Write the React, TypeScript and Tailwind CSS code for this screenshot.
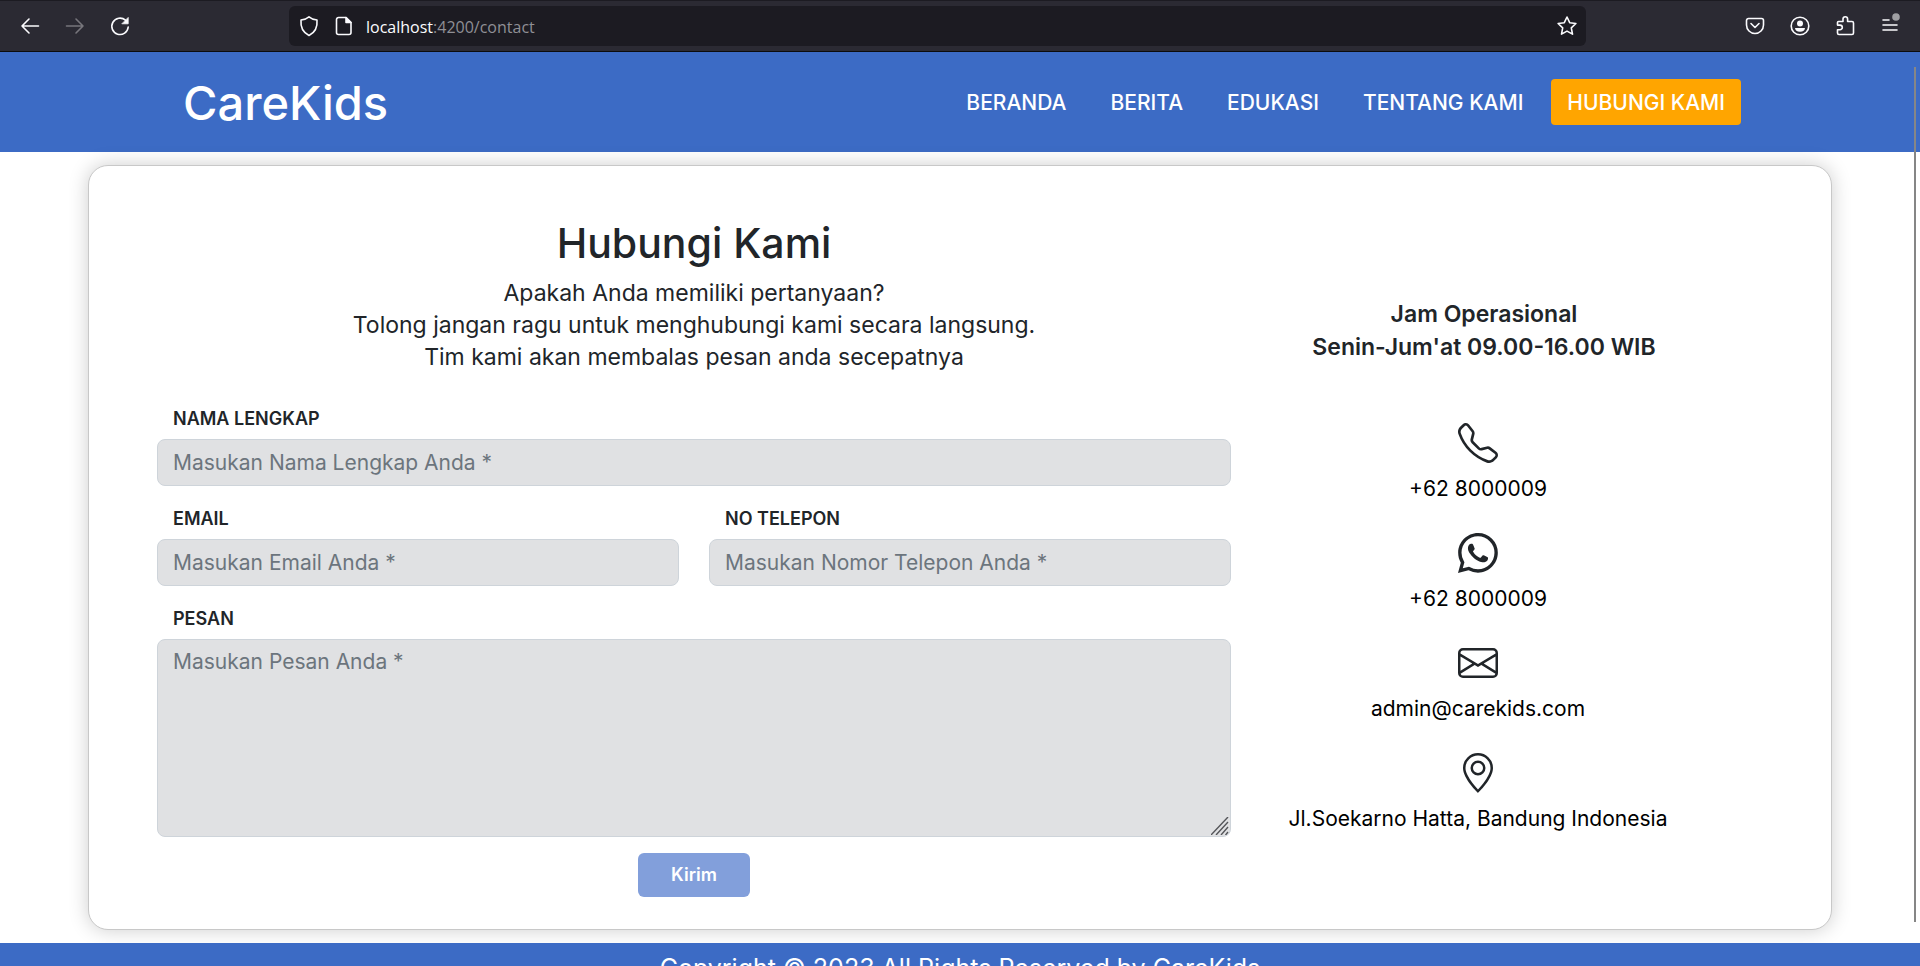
import type { ReactNode } from "react";
import { BsEnvelope, BsGeoAlt, BsTelephone, BsWhatsapp } from "react-icons/bs";

function ChromeIcon({ label, children, dim = false }: { label: string; children: ReactNode; dim?: boolean }) {
  return (
    <button type="button" aria-label={label} className={dim ? "text-[#77767c]" : "text-[#fbfbfe]"}>
      <svg width="20" height="20" viewBox="0 0 20 20" fill="none" stroke="currentColor" strokeWidth="1.6" strokeLinecap="round" strokeLinejoin="round" className="block overflow-visible">
        {children}
      </svg>
    </button>
  );
}

function BrowserBar() {
  return (
    <div className="flex h-13 shrink-0 items-center border-t border-b border-t-[#1c1b22] border-b-[#0c0c0d] bg-[#2b2a33] pr-5 pl-5">
      <div className="flex w-[269px] shrink-0 gap-[25px]">
        <ChromeIcon label="Kembali">
          <path d="M18.500 10H2M9 3L2 10l7 7" />
        </ChromeIcon>
        <ChromeIcon label="Maju" dim>
          <path d="M1.500 10H18M11 3l7 7-7 7" />
        </ChromeIcon>
        <ChromeIcon label="Muat ulang">
          <path d="M15.500 4.200A8.200 8.200 0 1 0 18.200 11" />
          <path d="M18.200 1.800v6h-6z" fill="currentColor" strokeWidth="0.800" />
        </ChromeIcon>
      </div>
      <div className="flex h-10 flex-1 items-center rounded-md bg-[#1c1b22] pr-[9px] pl-2.5">
        <ChromeIcon label="Perlindungan">
          <path d="M10 .8c2 1.700 4.800 2.700 8 3.200.6 6.500-2 12.500-8 15.500C4 16.500 1.400 10.500 2 4 5.200 3.500 8 2.500 10 .8z" />
        </ChromeIcon>
        <div className="w-[15px]" />
        <ChromeIcon label="Informasi situs">
          <path d="M4.500 1.500H12l5 5v10a2 2 0 0 1-2 2H4.500a2 2 0 0 1-2-2v-13a2 2 0 0 1 2-2z" />
          <path d="M12 1.500v5h5z" fill="currentColor" />
        </ChromeIcon>
        <p className="flex-1 pt-0.5 pl-3 font-['Open_Sans',sans-serif] text-base leading-6 text-[#8f8f95]">
          <span className="text-[#fbfbfe]">localhost</span>:4200/contact
        </p>
        <ChromeIcon label="Tandai halaman">
          <path d="M10 1l2.700 5.700 6.200.8-4.600 4.300 1.200 6.300L10 15.100l-5.500 3 1.200-6.300L1.100 7.500l6.200-.8z" />
        </ChromeIcon>
      </div>
      <div className="flex w-[314px] shrink-0 justify-end gap-[25px]">
        <ChromeIcon label="Pocket">
          <path d="M3.500 2.500h13a2 2 0 0 1 2 2V9a8.500 8.500 0 0 1-17 0V4.500a2 2 0 0 1 2-2z" />
          <path d="M6 7.500l4 4 4-4" />
        </ChromeIcon>
        <ChromeIcon label="Akun">
          <circle cx="10" cy="10" r="8.800" />
          <circle cx="10" cy="7.500" r="3" fill="currentColor" stroke="none" />
          <path d="M5 12h10c0 2-2 3.800-5 3.800S5 14 5 12z" fill="currentColor" stroke="none" />
        </ChromeIcon>
        <ChromeIcon label="Ekstensi">
          <path d="M3.500 5.500H8V3a2.300 2.300 0 0 1 4.600 0v2.500H17A1.500 1.500 0 0 1 18.500 7v10a1.500 1.500 0 0 1-1.500 1.500H4A1.500 1.500 0 0 1 2.500 17v-3.300H5a2.300 2.300 0 0 0 0-4.600H2.500V6.500a1 1 0 0 1 1-1z" />
        </ChromeIcon>
        <ChromeIcon label="Menu aplikasi">
          <path d="M3 4h6M3 9h14M3 14h14" />
          <circle cx="16" cy="1" r="3.800" fill="#9f9fa3" stroke="none" />
        </ChromeIcon>
      </div>
    </div>
  );
}

const links = ["BERANDA", "BERITA", "EDUKASI", "TENTANG KAMI"];

const contacts = [
  { icon: BsTelephone, text: "+62 8000009" },
  { icon: BsWhatsapp, text: "+62 8000009" },
  { icon: BsEnvelope, text: "admin@carekids.com" },
  { icon: BsGeoAlt, text: "Jl.Soekarno Hatta, Bandung Indonesia" },
];

const labelClass = "block pl-4 text-lg leading-7 font-semibold";
const fieldClass =
  "block w-full rounded-lg border border-[#ced4da] bg-[#e0e1e3] px-[15px] text-[21px] leading-7 text-[#212529] placeholder:text-[#6c757d]";

function Field({ id, label, placeholder, type = "text" }: { id: string; label: string; placeholder: string; type?: string }) {
  return (
    <div>
      <label htmlFor={id} className={labelClass}>
        {label}
      </label>
      <input id={id} type={type} placeholder={placeholder} className={`mt-1.5 h-[47px] ${fieldClass}`} />
    </div>
  );
}

export default function App() {
  return (
    <div className="flex h-screen flex-col overflow-hidden bg-white font-['Inter',sans-serif] text-[#212529]">
      <BrowserBar />
      <div className="relative flex-1 overflow-hidden">
        <header className="flex h-25 items-center justify-between bg-[#3c6bc5] pr-[179px] pl-[183px] text-white">
          <a href="#beranda" className="text-[47px] leading-none font-medium">
            CareKids
          </a>
          <nav className="flex items-center gap-3 text-[21px] leading-7 font-medium">
            {links.map((link) => (
              <a key={link} href="#" className="px-4 pt-2.5 pb-2">
                {link}
              </a>
            ))}
            <a href="#kontak" className="rounded-sm bg-[#ffa500] px-4 pt-2.5 pb-2">
              HUBUNGI KAMI
            </a>
          </nav>
        </header>

        <main className="px-[88px] py-[13px]">
          <section className="flex items-start gap-6 rounded-[20px] border border-[#c8c8c8] bg-white pt-[47px] pr-[130px] pb-8 pl-[68px] shadow-[0_0_20px_rgba(0,0,0,0.2)]">
            <form className="flex-1">
              <div className="text-center">
                <h1 className="text-[41px] leading-[60px] font-medium">Hubungi Kami</h1>
                <p className="mt-1 text-[23px] leading-8">
                  Apakah Anda memiliki pertanyaan?
                  <br />
                  Tolong jangan ragu untuk menghubungi kami secara langsung.
                  <br />
                  Tim kami akan membalas pesan anda secepatnya
                </p>
              </div>
              <div className="mt-8 grid gap-[19px]">
                <Field id="nama" label="NAMA LENGKAP" placeholder="Masukan Nama Lengkap Anda *" />
                <div className="grid grid-cols-2 gap-[30px]">
                  <Field id="email" type="email" label="EMAIL" placeholder="Masukan Email Anda *" />
                  <Field id="telepon" type="tel" label="NO TELEPON" placeholder="Masukan Nomor Telepon Anda *" />
                </div>
                <div className="relative">
                  <label htmlFor="pesan" className={labelClass}>
                    PESAN
                  </label>
                  <textarea id="pesan" placeholder="Masukan Pesan Anda *" className={`mt-1.5 h-[198px] resize-none py-2 ${fieldClass}`} />
                  <svg width="18" height="18" viewBox="0 0 18 18" stroke="#55565a" strokeWidth="1.400" className="absolute right-0.5 bottom-0.5">
                    <path d="M0 18L17 0M5 18L17 5M10 18l7-8M14.500 18l2.500-3" />
                  </svg>
                </div>
              </div>
              <div className="mt-4 flex justify-center">
                <button type="submit" className="h-11 w-28 rounded-md bg-[#829fdb] text-lg font-semibold text-white">
                  Kirim
                </button>
              </div>
            </form>

            <aside className="w-[446px] shrink-0 pt-[85px] text-center">
              <h2 className="pl-3 text-[23px] leading-[33px] font-semibold">
                Jam Operasional
                <br />
                Senin-Jum'at 09.00-16.00 WIB
              </h2>
              <ul className="mt-[59px] grid gap-[29px] text-[21px] leading-[30px] text-black">
                {contacts.map(({ icon: Icon, text }, i) => (
                  <li key={i} className="flex h-[81px] flex-col items-center justify-between">
                    <Icon size={40} className="shrink-0 text-[#212529]" aria-hidden />
                    <span className="whitespace-nowrap">{text}</span>
                  </li>
                ))}
              </ul>
            </aside>
          </section>
        </main>

        <footer className="bg-[#3c6bc5] pt-1.5 pb-1 text-center text-[25px] leading-[38px] text-white">
          Copyright © 2023 All Rights Reserved by CareKids
        </footer>
        <div className="absolute top-[15px] right-1 bottom-11 w-0.5 bg-[#868686]" />
      </div>
    </div>
  );
}
